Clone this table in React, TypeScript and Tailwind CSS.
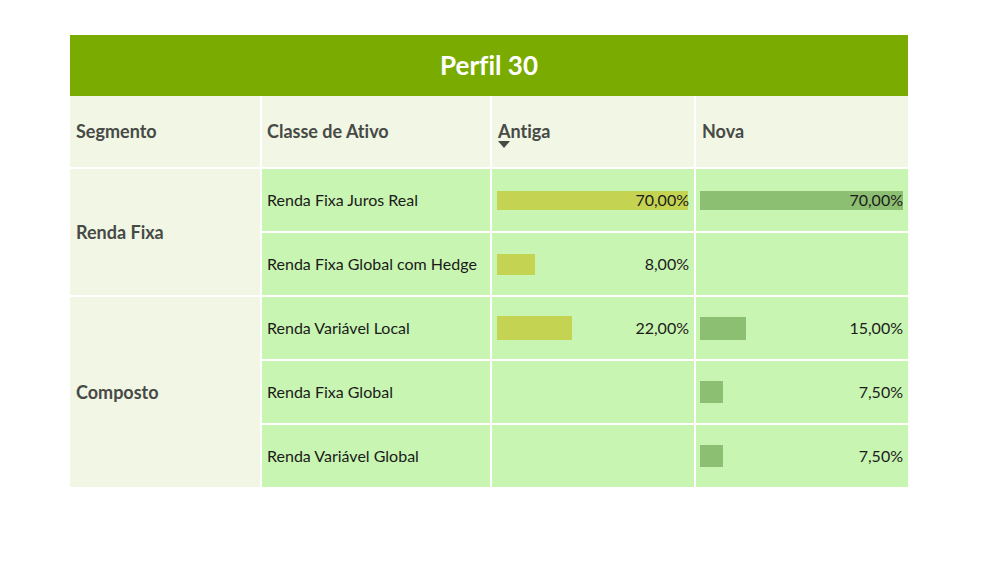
import React from "react";

type Row = {
  classe: string;
  antiga?: { label: string; w: number; h: number };
  nova?: { label: string; w: number; h: number };
};

const segmentos: { nome: string; rows: Row[] }[] = [
  {
    nome: "Renda Fixa",
    rows: [
      {
        classe: "Renda Fixa Juros Real",
        antiga: { label: "70,00%", w: 191, h: 19 },
        nova: { label: "70,00%", w: 203, h: 19 },
      },
      {
        classe: "Renda Fixa Global com Hedge",
        antiga: { label: "8,00%", w: 38, h: 21 },
      },
    ],
  },
  {
    nome: "Composto",
    rows: [
      {
        classe: "Renda Variável Local",
        antiga: { label: "22,00%", w: 75, h: 24 },
        nova: { label: "15,00%", w: 46, h: 23 },
      },
      {
        classe: "Renda Fixa Global",
        nova: { label: "7,50%", w: 23, h: 22 },
      },
      {
        classe: "Renda Variável Global",
        nova: { label: "7,50%", w: 23, h: 22 },
      },
    ],
  },
];

const BarCell = ({
  data,
  color,
  pad,
}: {
  data?: { label: string; w: number; h: number };
  color: string;
  pad: string;
}) => (
  <div className={`relative flex h-[62px] items-center bg-[#c8f5b1] ${pad}`}>
    {data && (
      <>
        <div className={color} style={{ width: data.w, height: data.h }} />
        <span className="absolute right-[5px] text-[16px] text-[#1b1b1b]">{data.label}</span>
      </>
    )}
  </div>
);

const App: React.FC = () => {
  return (
    <div className="min-h-screen bg-white pt-[35px] font-['Lato',sans-serif] [font-variant-ligatures:none]">
      <div className="mx-[70px] w-[838px]">
        <div className="flex h-[61px] items-center justify-center bg-[#7aab00]">
          <h1 className="text-[26px] font-bold text-white">Perfil 30</h1>
        </div>
        <div className="grid grid-cols-[190px_228px_202px_212px] gap-[2px] bg-white">
          {/* header */}
          <div className="flex h-[71px] items-center bg-[#f1f6e5] px-[6px] text-[18px] font-bold text-[#474a45]">
            Segmento
          </div>
          <div className="flex h-[71px] items-center bg-[#f1f6e5] px-[5px] text-[18px] font-bold text-[#474a45]">
            Classe de Ativo
          </div>
          <div className="flex h-[71px] items-center bg-[#f1f6e5] px-[6px] text-[18px] font-bold text-[#474a45]">
            <span className="relative">
              Antiga
              <svg
                className="absolute left-0 top-[23px]"
                width="12"
                height="7"
                viewBox="0 0 12 7"
              >
                <path d="M0 0h12L6 7z" fill="#474a45" />
              </svg>
            </span>
          </div>
          <div className="flex h-[71px] items-center bg-[#f1f6e5] px-[6px] text-[18px] font-bold text-[#474a45]">
            Nova
          </div>

          {segmentos.map((seg) => (
            <React.Fragment key={seg.nome}>
              <div
                className={`flex items-center bg-[#f1f6e5] px-[6px] text-[18px] font-bold text-[#474a45] ${
                  seg.rows.length === 2 ? "row-span-2" : "row-span-3"
                }`}
              >
                {seg.nome}
              </div>
              {seg.rows.map((r) => (
                <React.Fragment key={r.classe}>
                  <div className="flex h-[62px] items-center bg-[#c8f5b1] px-[5px] text-[16px] text-[#1b1b1b]">
                    {r.classe}
                  </div>
                  <BarCell data={r.antiga} color="bg-[#c4d452]" pad="pl-[5px]" />
                  <BarCell data={r.nova} color="bg-[#8dbf72]" pad="pl-[4px]" />
                </React.Fragment>
              ))}
            </React.Fragment>
          ))}
        </div>
      </div>
    </div>
  );
};

export default App;
